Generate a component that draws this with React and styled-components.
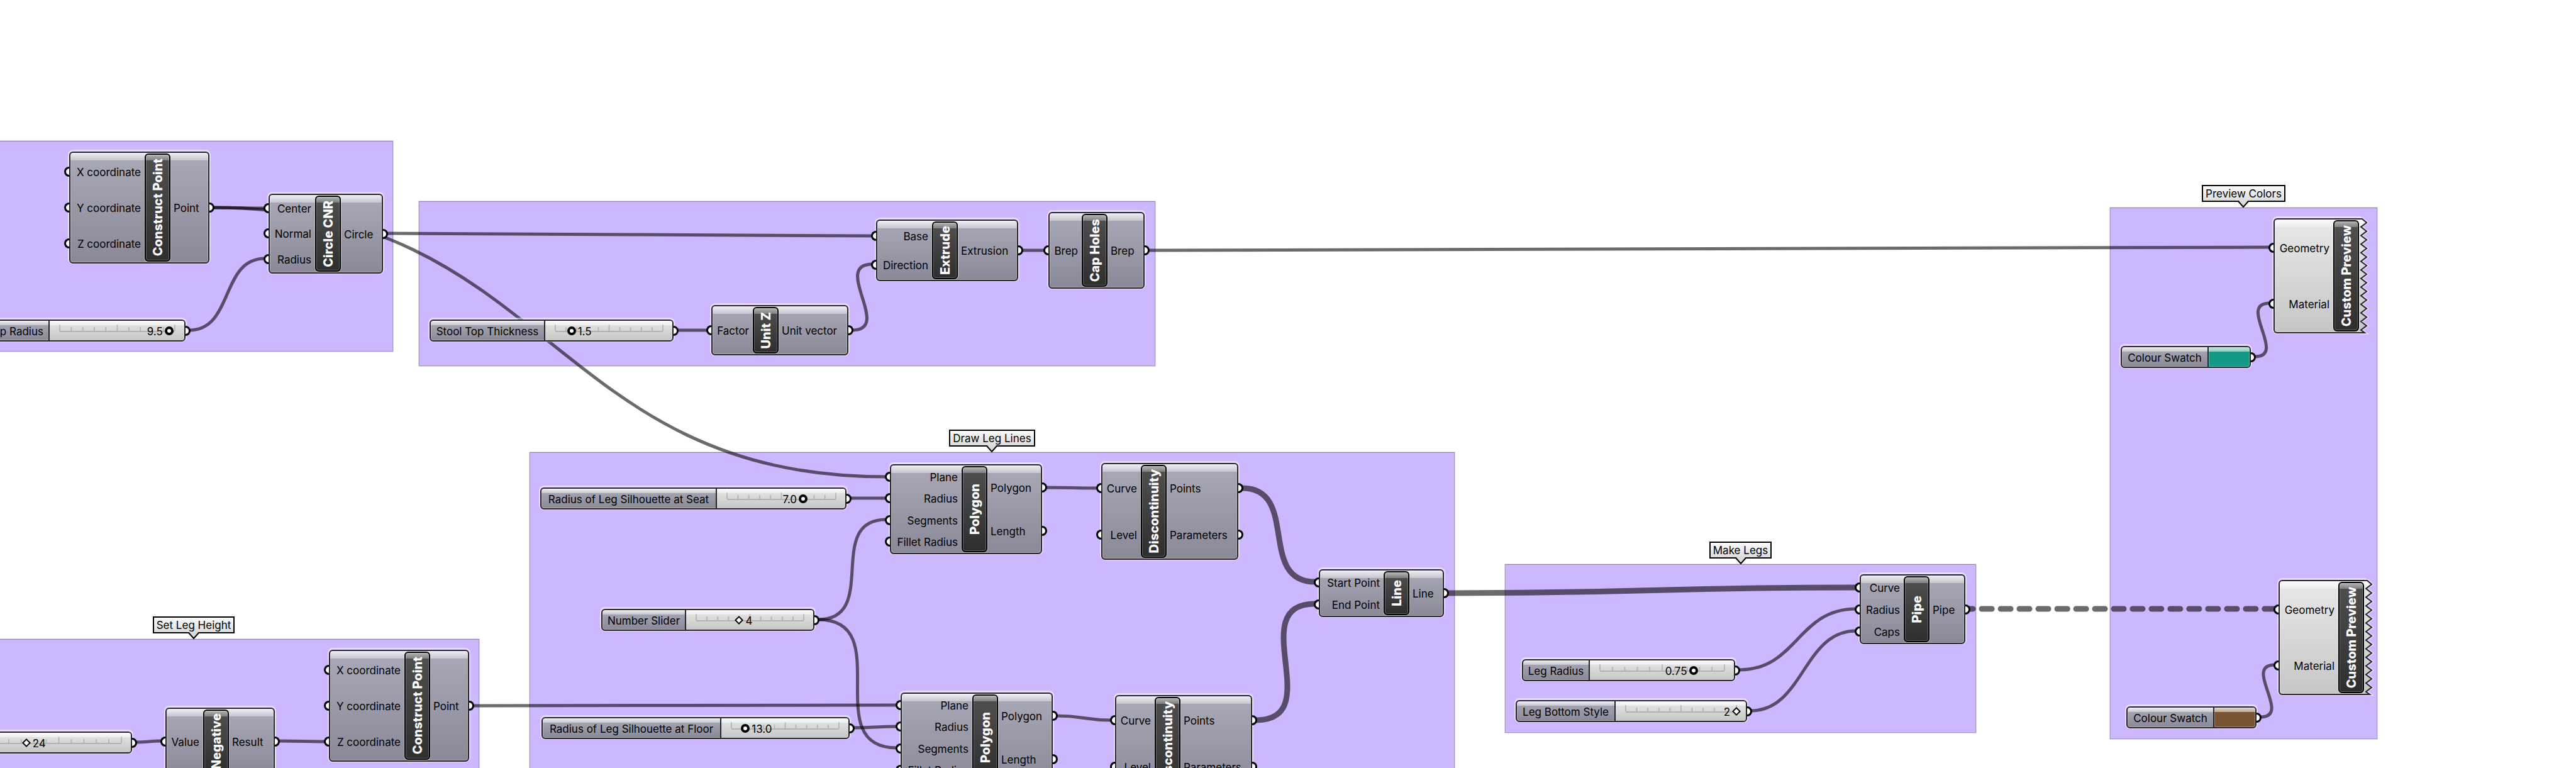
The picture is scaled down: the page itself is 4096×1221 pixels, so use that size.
import React, { useId, useState } from "react";
import styled, { createGlobalStyle, css } from "styled-components";

const GlobalStyle = createGlobalStyle`
  *, *::before, *::after { box-sizing: border-box; }
  body {
    margin: 0;
    background: #fff;
    color: #000;
    font-family: Inter, Roboto, "Liberation Sans", sans-serif;
    font-size: 17px;
    line-height: 20px;
  }
`;

/* ---------- canvas and groups ---------- */

const Canvas = styled.main`
  position: relative;
  height: 100vh;
  overflow: hidden;
`;

const place = css`
  position: absolute;
  left: ${(p) => p.$x}px;
  top: ${(p) => p.$y}px;
  width: ${(p) => p.$w}px;
  height: ${(p) => p.$h}px;
`;

const GroupArea = styled.section`
  ${place}
  display: flex;
  justify-content: center;
  background: #cdb7ff;
  border: 1px solid #a596cd;
  border-top-color: #9082b4;
  box-shadow: 0 0 0 1px #dcdae2;
`;

const Tag = styled.h2`
  position: absolute;
  bottom: 100%;
  height: 27px;
  margin: 0 0 10px;
  padding: 2px 4px;
  border: 2px solid #000;
  background: linear-gradient(#fafafa, #dcdcdc);
  font-size: 17px;
  font-weight: 400;
  line-height: 20px;
  white-space: nowrap;
`;

const TagTip = styled.svg`
  position: absolute;
  left: calc(50% - 9px);
  top: calc(100% - 1px);
  width: 18px;
  height: 13px;
`;

const WireLayer = styled.svg`
  position: absolute;
  inset: 0;
  width: 100%;
  height: 100%;
  fill: none;
  stroke: #000;
  stroke-opacity: 0.58;
`;

/* ---------- shared node parts ---------- */

const shell = css`
  border: 2px solid #262628;
  border-radius: 6px;
  box-shadow: 0 -1px 0 2px rgba(255, 255, 255, 0.5),
    inset 0 0 0 1px rgba(255, 255, 255, 0.3);
`;

const greyFill = "linear-gradient(#aaa9b7, #8b8998)";
const lightFill = "linear-gradient(#e8e8e8, #c6c6c6)";

const Port = styled.span`
  position: absolute;
  top: calc(50% - 8px);
  ${(p) => (p.$side === "in" ? "left" : "right")}: -${(p) => p.$out}px;
  width: 8px;
  height: 16px;
  background: #fff;
  border: 3px solid #000;
  ${(p) =>
    p.$side === "in"
      ? "border-right: 0; border-radius: 8px 0 0 8px;"
      : "border-left: 0; border-radius: 0 8px 8px 0;"}
`;

const NodeBox = styled.article`
  ${place}
  ${shell}
  display: grid;
  grid-template-columns: ${(p) => p.$inputs}px 41px 1fr;
  padding: 1px;
  background: linear-gradient(#f0eff4, #c6c5cf) 0 0 / 100% 12px no-repeat, ${greyFill};
  ${(p) =>
    p.$light &&
    css`
      border-right: 0;
      border-radius: 6px 0 0 6px;
      background: linear-gradient(#fcfcfc, #ececec) 0 0 / 100% 12px no-repeat, ${lightFill};
    `}
`;

const PortList = styled.ul`
  display: flex;
  flex-direction: column;
  margin: 0;
  padding: 0;
  list-style: none;
`;

const PortRow = styled.li`
  position: relative;
  flex: 1;
  display: flex;
  align-items: center;
  justify-content: ${(p) => (p.$side === "in" ? "flex-end" : "flex-start")};
  padding: ${(p) => (p.$side === "in" ? "2px 6px 0 0" : "2px 0 0 5px")};
  white-space: nowrap;
`;

const NodeName = styled.h3`
  display: flex;
  align-items: center;
  justify-content: center;
  min-height: 0;
  margin: 0;
  border: 2px solid #000;
  border-radius: 6px;
  background: linear-gradient(#b4b4b4, #7e7e7e) 0 0 / 100% 9px no-repeat,
    linear-gradient(#505050, #2e2e2e);
  box-shadow: inset 0 0 0 1px rgba(255, 255, 255, 0.25), 0 0 0 1px rgba(255, 255, 255, 0.3);
  color: #fff;
  font-size: 20px;
  font-weight: 800;
  line-height: 24px;
`;

const Sideways = styled.span`
  writing-mode: vertical-rl;
  transform: rotate(180deg);
  white-space: nowrap;
`;

const TornEdge = styled.svg`
  position: absolute;
  left: 100%;
  top: -4px;
  width: 16px;
  height: 187px;
`;

/* ---------- sliders and swatches ---------- */

const Strip = styled.div`
  ${place}
  ${shell}
  display: flex;
  background: linear-gradient(#f0eff4, #c6c5cf) 0 0 / 100% 7px no-repeat, ${greyFill};
`;

const StripLabel = styled.label`
  flex: none;
  display: flex;
  align-items: center;
  justify-content: ${(p) => (p.$end ? "flex-end" : "center")};
  width: ${(p) => p.$w}px;
  padding: ${(p) => (p.$end ? "2px 8px 0 0" : "2px 0 0")};
  border-right: 2px solid #262628;
  white-space: nowrap;
`;

const Track = styled.div`
  position: relative;
  flex: 1;
  display: flex;
  align-items: center;
  padding: 0 8px 0 9px;
  border-radius: 0 4px 4px 0;
  background: linear-gradient(#fcfcfc, #ececec) 0 0 / 100% 7px no-repeat, ${lightFill};
`;

const Ruler = styled.svg`
  position: absolute;
  left: 16px;
  right: 15px;
  top: 6px;
  width: calc(100% - 31px);
  height: 12px;
  overflow: visible;
  stroke: #000;
  stroke-opacity: 0.16;
  stroke-width: 2px;
`;

const thumb = css`
  appearance: none;
  box-sizing: border-box;
  background: #fff;
  border-style: solid;
  border-color: #000;
`;

const Range = styled.input`
  appearance: none;
  position: relative;
  flex: 1;
  min-width: 0;
  height: 14px;
  margin: 0;
  background: transparent;
  &::-webkit-slider-thumb {
    ${thumb}
    width: 14px;
    height: 14px;
    border-width: 4px;
    border-radius: 50%;
  }
  &[data-whole="true"] {
    margin: 0 2px;
  }
  &[data-whole="true"]::-webkit-slider-thumb {
    width: 10px;
    height: 10px;
    border-width: 2px;
    border-radius: 0;
    transform: rotate(45deg);
  }
`;

const Reading = styled.output`
  position: absolute;
  top: 7px;
  ${(p) => (p.$before ? "transform: translateX(-100%); margin-left: -10px;" : "margin-left: 10px;")}
  pointer-events: none;
`;

const Swatch = styled.button`
  flex: 1;
  padding: 0;
  border: 0;
  border-radius: 0 4px 4px 0;
  background: linear-gradient(rgba(255, 255, 255, 0.75), rgba(255, 255, 255, 0.5)) 0 0 / 100% 7px
      no-repeat,
    ${(p) => p.$color};
  box-shadow: inset 0 0 0 1px rgba(255, 255, 255, 0.3);
`;

/* ---------- components ---------- */

function Group({ x, y, w, h, title }) {
  return (
    <GroupArea $x={x} $y={y} $w={w} $h={h}>
      {title && (
        <Tag>
          {title}
          <TagTip viewBox="0 0 18 13" aria-hidden="true">
            <path d="M1 0 L9 11 L17 0 Z" fill="#dcdcdc" />
            <path d="M0 2 L1 2 L9 11 L17 2 L18 2" fill="none" stroke="#000" strokeWidth="2" />
          </TagTip>
        </Tag>
      )}
    </GroupArea>
  );
}

function tornPoints() {
  const points = [[0, 3], [4, 3]];
  for (let k = 0; k < 26; k += 1) {
    points.push([k % 2 ? 2 : 11, 9 + k * 6.83]);
  }
  points.push([8, 184], [0, 184]);
  return points.map((p) => p.join(",")).join(" ");
}

function Torn() {
  const fill = useId();
  const points = tornPoints();
  return (
    <TornEdge viewBox="0 0 16 187" aria-hidden="true">
      <defs>
        <linearGradient id={fill} x1="0" x2="0" y1="0" y2="1">
          <stop offset="0" stopColor="#fcfcfc" />
          <stop offset="0.07" stopColor="#ececec" />
          <stop offset="0.07" stopColor="#e8e8e8" />
          <stop offset="1" stopColor="#c6c6c6" />
        </linearGradient>
      </defs>
      <polyline points={points} fill="none" stroke="#fff" strokeOpacity="0.5" strokeWidth="5" />
      <polyline points={points} fill={`url(#${fill})`} stroke="#262628" strokeWidth="2" />
    </TornEdge>
  );
}

function Node({ x, y, w, h, inputs, outputs, name, split, light }) {
  return (
    <NodeBox $x={x} $y={y} $w={w} $h={h} $inputs={split - 3} $light={light}>
      <PortList>
        {inputs.map((text) => (
          <PortRow key={text} $side="in">
            <Port $side="in" $out={11} />
            {text}
          </PortRow>
        ))}
      </PortList>
      <NodeName>
        <Sideways>{name}</Sideways>
      </NodeName>
      {light ? (
        <Torn />
      ) : (
        <PortList>
          {outputs.map((text) => (
            <PortRow key={text} $side="out">
              {text}
              <Port $side="out" $out={11} />
            </PortRow>
          ))}
        </PortList>
      )}
    </NodeBox>
  );
}

function Slider({ x, y, w, label, labelW, max, start, digits, before, end }) {
  const id = useId();
  const [value, setValue] = useState(start);
  const ratio = value / max;
  const ticks = Array.from({ length: 11 }, (_, i) => i);
  return (
    <Strip $x={x} $y={y} $w={w} $h={35}>
      {label && (
        <StripLabel htmlFor={id} $w={labelW} $end={end}>
          {label}
        </StripLabel>
      )}
      <Track>
        <Ruler aria-hidden="true">
          <line x1="0" x2="100%" y1="11" y2="11" />
          {ticks.map((i) => (
            <line key={i} x1={`${i * 10}%`} x2={`${i * 10}%`} y1={i % 5 ? 4 : 0} y2="10" />
          ))}
        </Ruler>
        <Range
          id={id}
          type="range"
          aria-label={label ? undefined : "Value"}
          min={0}
          max={max}
          step={10 ** -digits}
          value={value}
          data-whole={digits === 0}
          onChange={(e) => setValue(Number(e.target.value))}
        />
        <Reading
          htmlFor={id}
          $before={before}
          style={{ left: `calc(16px + ${ratio} * (100% - 31px))` }}
        >
          {value.toFixed(digits)}
        </Reading>
      </Track>
      <Port $side="out" $out={10} />
    </Strip>
  );
}

function ColourSwatch({ x, y, color }) {
  const id = useId();
  return (
    <Strip $x={x} $y={y} $w={207} $h={35}>
      <StripLabel htmlFor={id} $w={138}>
        Colour Swatch
      </StripLabel>
      <Swatch id={id} type="button" $color={color} />
      <Port $side="out" $out={10} />
    </Strip>
  );
}

function wirePath([x1, y1, x2, y2]) {
  const a = x1 + 6;
  const b = x2 - 6;
  const reach = Math.max((b - a) / 2, Math.abs(y2 - y1) * 0.62);
  return `M${a} ${y1} C${a + reach} ${y1} ${b - reach} ${y2} ${b} ${y2}`;
}

/* ---------- document ---------- */

const groups = [
  { x: -146, y: 224, w: 771, h: 335 },
  { x: 666, y: 320, w: 1171, h: 262 },
  { x: -146, y: 1016, w: 908, h: 300, title: "Set Leg Height" },
  { x: 842, y: 719, w: 1471, h: 600, title: "Draw Leg Lines" },
  { x: 2393, y: 897, w: 749, h: 268, title: "Make Legs" },
  { x: 3355, y: 330, w: 425, h: 845, title: "Preview Colors" },
];

const coordinates = ["X coordinate", "Y coordinate", "Z coordinate"];
const polygonIn = ["Plane", "Radius", "Segments", "Fillet Radius"];

const nodes = [
  { x: 110, y: 241, w: 223, h: 178, split: 120, name: "Construct Point", inputs: coordinates, outputs: ["Point"] },
  { x: 427, y: 308, w: 182, h: 127, split: 74, name: "Circle CNR", inputs: ["Center", "Normal", "Radius"], outputs: ["Circle"] },
  { x: 1131, y: 485, w: 218, h: 80, split: 66, name: "Unit Z", inputs: ["Factor"], outputs: ["Unit vector"] },
  { x: 1393, y: 349, w: 226, h: 98, split: 89, name: "Extrude", inputs: ["Base", "Direction"], outputs: ["Extrusion"] },
  { x: 1667, y: 337, w: 153, h: 122, split: 53, name: "Cap Holes", inputs: ["Brep"], outputs: ["Brep"] },
  { x: 523, y: 1033, w: 223, h: 178, split: 120, name: "Construct Point", inputs: coordinates, outputs: ["Point"] },
  { x: 263, y: 1125, w: 174, h: 107, split: 60, name: "Negative", inputs: ["Value"], outputs: ["Result"] },
  { x: 1415, y: 738, w: 242, h: 143, split: 114, name: "Polygon", inputs: polygonIn, outputs: ["Polygon", "Length"] },
  { x: 1751, y: 736, w: 218, h: 154, split: 63, name: "Discontinuity", inputs: ["Curve", "Level"], outputs: ["Points", "Parameters"] },
  { x: 1432, y: 1101, w: 242, h: 143, split: 114, name: "Polygon", inputs: polygonIn, outputs: ["Polygon", "Length"] },
  { x: 1773, y: 1105, w: 218, h: 154, split: 63, name: "Discontinuity", inputs: ["Curve", "Level"], outputs: ["Points", "Parameters"] },
  { x: 2097, y: 905, w: 199, h: 76, split: 103, name: "Line", inputs: ["Start Point", "End Point"], outputs: ["Line"] },
  { x: 2957, y: 913, w: 168, h: 111, split: 70, name: "Pipe", inputs: ["Curve", "Radius", "Caps"], outputs: ["Pipe"] },
  { x: 3615, y: 347, w: 137, h: 183, split: 95, name: "Custom Preview", inputs: ["Geometry", "Material"], light: true },
  { x: 3623, y: 922, w: 137, h: 183, split: 95, name: "Custom Preview", inputs: ["Geometry", "Material"], light: true },
];

const sliders = [
  { x: -80, y: 508, w: 375, label: "Stool Top Radius", labelW: 157, max: 10, start: 9.5, digits: 1, before: true, end: true },
  { x: 683, y: 508, w: 388, label: "Stool Top Thickness", labelW: 182, max: 10, start: 1.5, digits: 1 },
  { x: -24, y: 1163, w: 234, max: 100, start: 24, digits: 0 },
  { x: 859, y: 775, w: 487, label: "Radius of Leg Silhouette at Seat", labelW: 279, max: 10, start: 7, digits: 1, before: true },
  { x: 956, y: 968, w: 339, label: "Number Slider", labelW: 133, max: 10, start: 4, digits: 0 },
  { x: 861, y: 1140, w: 490, label: "Radius of Leg Silhouette at Floor", labelW: 284, max: 100, start: 13, digits: 1 },
  { x: 2420, y: 1048, w: 339, label: "Leg Radius", labelW: 106, max: 1, start: 0.75, digits: 2, before: true },
  { x: 2410, y: 1113, w: 368, label: "Leg Bottom Style", labelW: 157, max: 2, start: 2, digits: 0, before: true },
];

const wires = [
  [333, 330, 427, 331],
  [333, 330, 1415, 758],
  [295, 525, 427, 411],
  [609, 371, 1393, 375],
  [1071, 525, 1131, 525],
  [1349, 525, 1393, 420],
  [1619, 398, 1667, 398],
  [1820, 398, 3615, 393],
  [3579, 567, 3615, 482],
  [3588, 1140, 3623, 1057],
  [1346, 792, 1415, 792],
  [1295, 985, 1415, 826],
  [1295, 985, 1432, 1189],
  [1351, 1157, 1432, 1155],
  [746, 1122, 1432, 1121],
  [210, 1180, 263, 1178],
  [437, 1178, 523, 1179],
  [1657, 775, 1751, 776],
  [1674, 1138, 1773, 1145],
  [2759, 1065, 2957, 968],
  [2778, 1130, 2957, 1003],
];

const listWires = [
  [1969, 776, 2097, 925],
  [1991, 1145, 2097, 960],
  [2296, 943, 2957, 934],
];

const treeWires = [[3125, 968, 3623, 968]];

export default function App() {
  return (
    <>
      <GlobalStyle />
      <Canvas>
        {groups.map((g, i) => (
          <Group key={i} {...g} />
        ))}
        <WireLayer aria-hidden="true">
          {wires.map((w, i) => (
            <path key={i} d={wirePath(w)} strokeWidth="5" />
          ))}
          {listWires.map((w, i) => (
            <path key={i} d={wirePath(w)} strokeWidth="9" />
          ))}
          {treeWires.map((w, i) => (
            <path
              key={i}
              d={wirePath(w)}
              strokeWidth="9"
              strokeLinecap="round"
              strokeDasharray="16 14"
              strokeDashoffset="10"
            />
          ))}
        </WireLayer>
        {nodes.map((n, i) => (
          <Node key={i} {...n} />
        ))}
        {sliders.map((s, i) => (
          <Slider key={i} {...s} />
        ))}
        <ColourSwatch x={3372} y={550} color="#129a87" />
        <ColourSwatch x={3381} y={1123} color="#785433" />
      </Canvas>
    </>
  );
}
